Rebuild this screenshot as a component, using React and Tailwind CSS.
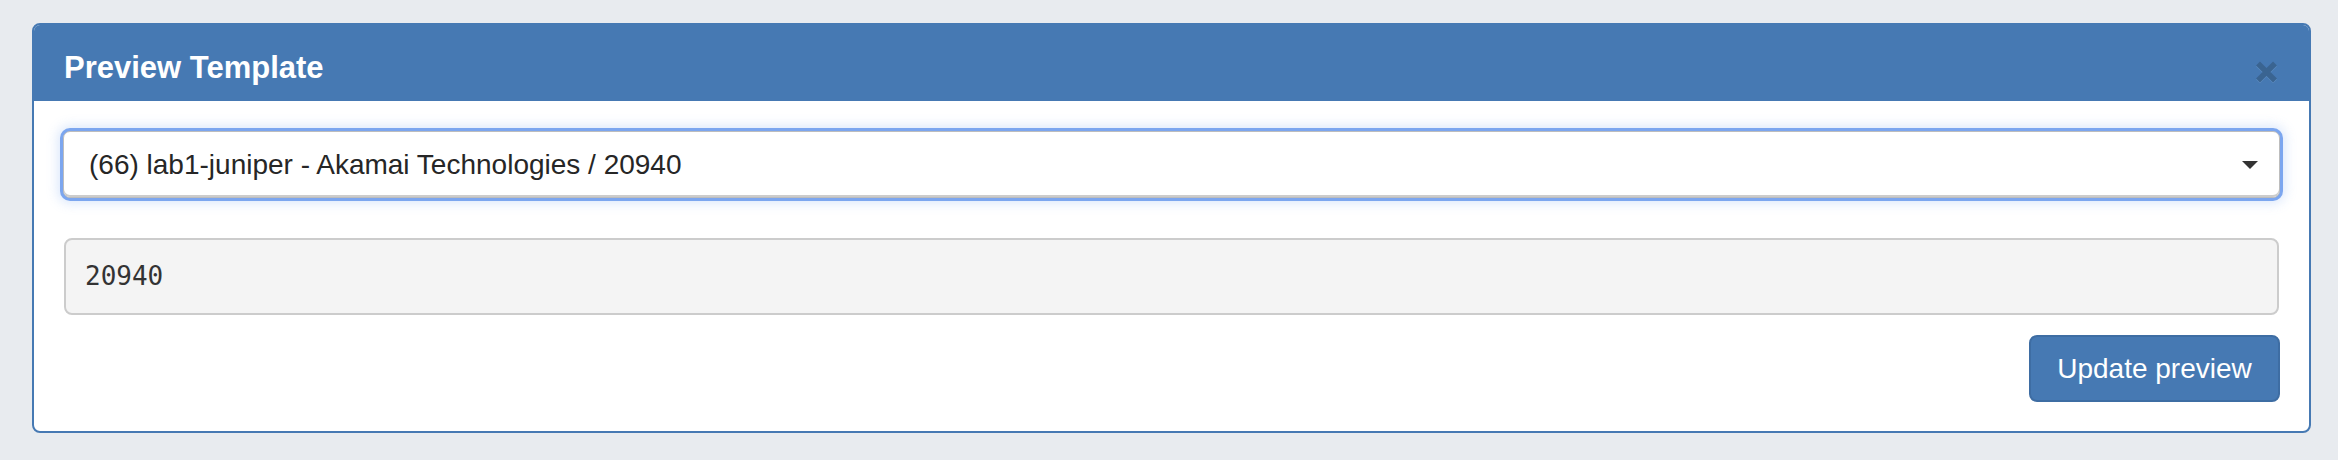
import React, { useState } from 'react';

export default function App() {
    const [asn] = useState('20940');

    return (
        <div className="w-[2338px] h-[460px] bg-[#e8ebef] pt-[23px] pl-[32px] pr-[27px]" style={{ fontFamily: '"Liberation Sans", Arial, sans-serif' }}>
            <div className="w-[2279px] border-2 border-[#4679b3] rounded-[8px] bg-white overflow-hidden">
                {/* header */}
                <div className="h-[76px] bg-[#4679b3] flex items-start justify-between pl-[30px] pr-[32px]">
                    <h4 className="text-white font-bold text-[31px] leading-none pt-[27px]">Preview Template</h4>
                    <button className="mt-[35px] w-[21px] h-[23px] flex items-center justify-center">
                        <svg width="21" height="23" viewBox="0 0 21 23">
                            <path d="M2 3.5 L19 20.5 M19 3.5 L2 20.5" stroke="#5a8bc0" strokeWidth="5.5" transform="translate(0 1)" />
                            <path d="M2 3.5 L19 20.5 M19 3.5 L2 20.5" stroke="#3a6491" strokeWidth="5.5" />
                        </svg>
                    </button>
                </div>

                {/* body */}
                <div className="px-[29px] pt-[30px] pb-[29px]">
                    <div className="h-[67px] flex items-center justify-between rounded-[7px] border border-[#bdbdbd] bg-white pl-[25px] pr-[21px] shadow-[inset_0_-2px_0_#cccccc,0_0_0_3px_#7ca6ef,0_0_12px_5px_rgba(120,165,240,0.28)]">
                        <span className="text-[28px] text-[#262626]">(66) lab1-juniper - Akamai Technologies / 20940</span>
                        <svg width="16" height="8" viewBox="0 0 16 8">
                            <path d="M0 0 L16 0 L8 8 Z" fill="#333333" />
                        </svg>
                    </div>

                    <div className="mt-[40px] ml-[1px] mr-[1px] h-[77px] flex items-center rounded-[8px] border-2 border-[#cccccc] bg-[#f4f4f4] px-[19px]">
                        <span className="text-[26px] text-[#333333]" style={{ fontFamily: '"DejaVu Sans Mono", monospace' }}>{asn}</span>
                    </div>

                    <div className="mt-[20px] flex justify-end">
                        <button className="w-[251px] h-[67px] rounded-[8px] border-2 border-[#3e6da3] bg-[#4679b3] text-white text-[28px] leading-none">
                            Update preview
                        </button>
                    </div>
                </div>
            </div>
        </div>
    );
}
